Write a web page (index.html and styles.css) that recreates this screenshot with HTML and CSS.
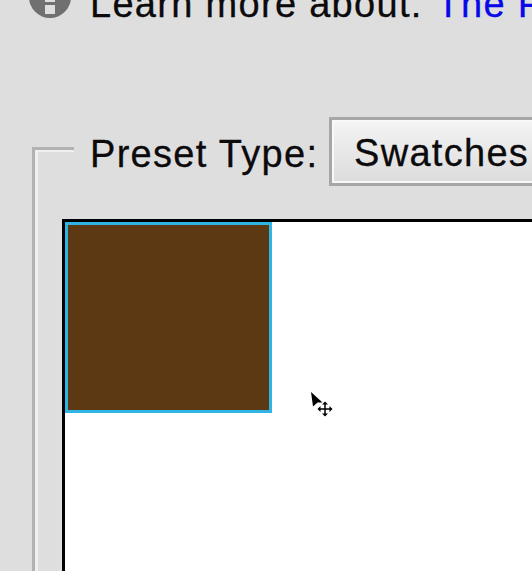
FILE: index.html
```html
<!DOCTYPE html>
<html lang="en">
<head>
    <meta charset="UTF-8">
    <meta name="viewport" content="width=device-width, initial-scale=1.0">
    <title>Preset Manager</title>
    <link rel="stylesheet" href="styles.css">
</head>
<body>
    <div class="note">
        <svg class="note-icon" viewBox="0 0 42 42" width="42" height="42">
            <circle cx="21" cy="21" r="21" fill="#707070"/>
            <rect x="16" y="13" width="10" height="13" fill="#dedede"/>
            <rect x="16" y="29" width="10" height="9" fill="#dedede"/>
        </svg>
        <p class="note-text">Learn more about: <a class="note-link" href="#">The Preset Manager</a></p>
    </div>

    <div class="group">
        <div class="group-inner">
            <div class="group-head">
                <label class="type-label">Preset Type:</label>
                <div class="type-select">Swatches</div>
            </div>
            <div class="preset-list">
                <div class="swatch"></div>
            </div>
        </div>
    </div>

    <svg class="cursor" viewBox="0 0 24 26" width="24" height="26">
        <path d="M0 0 L11.500 10.500 L6.500 10.500 L2 14.500 Z" fill="#000"/>
        <path d="M8 17 H20 M14 11 V23" stroke="#000" stroke-width="1.500" fill="none"/>
        <path d="M14 9.500 L17 12.500 H11 Z M14 24.500 L17 21.500 H11 Z M6.500 17 L9.500 14 V20 Z M21.500 17 L18.500 14 V20 Z" fill="#000"/>
    </svg>
</body>
</html>
```

FILE: styles.css
```css
* {
    margin: 0;
    padding: 0;
    box-sizing: border-box;
}

html, body {
    height: 100%;
    overflow: hidden;
}

body {
    position: relative;
    background: #dedede;
    color: #0c0a0c;
    font-family: "Liberation Sans", Arial, sans-serif;
    font-size: 38px;
    letter-spacing: 1.300px;
    -webkit-text-stroke: 0.300px currentColor;
}

.note {
    display: flex;
    align-items: flex-end;
    height: 26px;
    margin-left: 29px;
    gap: 19px;
}

.note-icon {
    flex-shrink: 0;
    margin-bottom: 8px;
}

.note-text {
    white-space: nowrap;
    line-height: 44px;
}

.note-link {
    margin-left: 2px;
    color: #0808e8;
    text-decoration: none;
}

.group {
    margin-top: 121px;
    margin-left: 32px;
    border-top: 3px solid #b2b2b2;
    border-left: 3px solid #b2b2b2;
}

.group-inner {
    border-top: 2px solid #efefef;
    border-left: 3px solid #efefef;
    padding-left: 24px;
}

.group-head {
    display: flex;
    align-items: center;
    height: 69px;
    margin-top: -35px;
    margin-left: 12px;
    margin-bottom: 33px;
    padding-left: 16px;
    background: #dedede;
}

.type-label {
    flex-shrink: 0;
    width: 239px;
    padding-top: 6px;
    white-space: nowrap;
}

.type-select {
    flex-shrink: 0;
    width: 400px;
    height: 69px;
    padding: 3px 0 0 22px;
    line-height: 60px;
    border: 3px solid #a6a6a6;
    box-shadow: inset 0 0 0 2px #f8f8f8;
    background: linear-gradient(#f4f4f4, #dcdcdc);
}

.preset-list {
    width: 700px;
    height: 500px;
    border: 3px solid #000;
    background: #fff;
}

.swatch {
    width: 207px;
    height: 191px;
    border: 3px solid #30b4e4;
    background: #5c3813;
}

.cursor {
    position: absolute;
    left: 311px;
    top: 392px;
}
```
